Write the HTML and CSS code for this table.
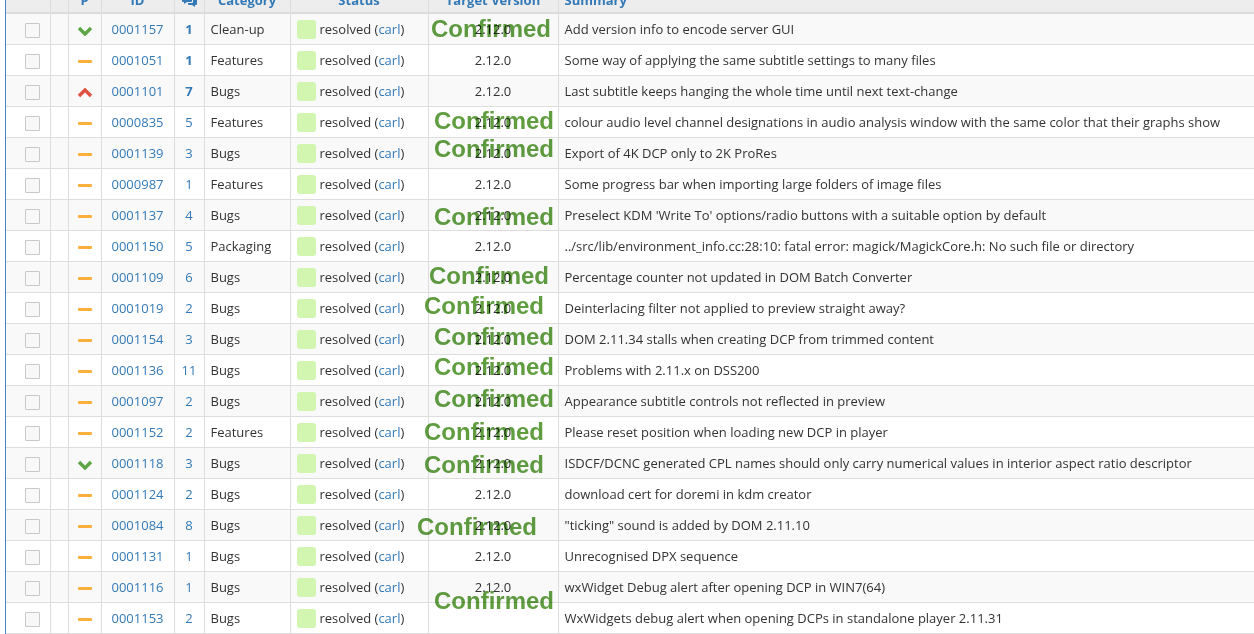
FILE: index.html
```html
<!DOCTYPE html>
<html>
<head>
<meta charset="utf-8">
<link rel="stylesheet" href="styles.css">
</head>
<body>
<div class="page">
<div class="wrap">
<table class="issues">
<colgroup>
<col class="w-cb"><col class="w-e"><col class="w-p"><col class="w-id"><col class="w-n"><col class="w-cat"><col class="w-st"><col class="w-ver"><col>
</colgroup>
<thead>
<tr>
<th></th><th></th><th>P</th><th>ID</th>
<th><svg class="ico-notes" width="15" height="12" viewBox="0 0 15 12"><path d="M1 1h8a1 1 0 0 1 1 1v4a1 1 0 0 1-1 1H5l-3 2V7H1a1 1 0 0 1-1-1V2a1 1 0 0 1 1-1z" fill="#337ab7"/><path d="M11 4h3a1 1 0 0 1 1 1v4a1 1 0 0 1-1 1h-1v2l-3-2H7a1 1 0 0 1-1-1V8h4a1 1 0 0 0 1-1z" fill="#337ab7"/></svg></th>
<th>Category</th><th>Status</th><th>Target Version</th><th class="left">Summary</th>
</tr>
</thead>
<tbody>
<tr><td><span class="cb"></span></td><td></td><td><svg class="pi" width="16" height="10" viewBox="0 0 16 10"><path d="M2 2l6 6 6-6" class="ok"/></svg></td><td class="c"><a>0001157</a></td><td class="c"><a class="b">1</a></td><td>Clean-up</td><td><span class="sq"></span>resolved (<a>carl</a>)</td><td class="c">2.12.0</td><td>Add version info to encode server GUI</td></tr>
<tr><td><span class="cb"></span></td><td></td><td><span class="dash"></span></td><td class="c"><a>0001051</a></td><td class="c"><a class="b">1</a></td><td>Features</td><td><span class="sq"></span>resolved (<a>carl</a>)</td><td class="c">2.12.0</td><td>Some way of applying the same subtitle settings to many files</td></tr>
<tr><td><span class="cb"></span></td><td></td><td><svg class="pi" width="16" height="10" viewBox="0 0 16 10"><path d="M2 8l6-6 6 6" class="up"/></svg></td><td class="c"><a>0001101</a></td><td class="c"><a class="b">7</a></td><td>Bugs</td><td><span class="sq"></span>resolved (<a>carl</a>)</td><td class="c">2.12.0</td><td>Last subtitle keeps hanging the whole time until next text-change</td></tr>
<tr><td><span class="cb"></span></td><td></td><td><span class="dash"></span></td><td class="c"><a>0000835</a></td><td class="c"><a>5</a></td><td>Features</td><td><span class="sq"></span>resolved (<a>carl</a>)</td><td class="c">2.12.0</td><td>colour audio level channel designations in audio analysis window with the same color that their graphs show</td></tr>
<tr><td><span class="cb"></span></td><td></td><td><span class="dash"></span></td><td class="c"><a>0001139</a></td><td class="c"><a>3</a></td><td>Bugs</td><td><span class="sq"></span>resolved (<a>carl</a>)</td><td class="c">2.12.0</td><td>Export of 4K DCP only to 2K ProRes</td></tr>
<tr><td><span class="cb"></span></td><td></td><td><span class="dash"></span></td><td class="c"><a>0000987</a></td><td class="c"><a>1</a></td><td>Features</td><td><span class="sq"></span>resolved (<a>carl</a>)</td><td class="c">2.12.0</td><td>Some progress bar when importing large folders of image files</td></tr>
<tr><td><span class="cb"></span></td><td></td><td><span class="dash"></span></td><td class="c"><a>0001137</a></td><td class="c"><a>4</a></td><td>Bugs</td><td><span class="sq"></span>resolved (<a>carl</a>)</td><td class="c">2.12.0</td><td>Preselect KDM 'Write To' options/radio buttons with a suitable option by default</td></tr>
<tr><td><span class="cb"></span></td><td></td><td><span class="dash"></span></td><td class="c"><a>0001150</a></td><td class="c"><a>5</a></td><td>Packaging</td><td><span class="sq"></span>resolved (<a>carl</a>)</td><td class="c">2.12.0</td><td>../src/lib/environment_info.cc:28:10: fatal error: magick/MagickCore.h: No such file or directory</td></tr>
<tr><td><span class="cb"></span></td><td></td><td><span class="dash"></span></td><td class="c"><a>0001109</a></td><td class="c"><a>6</a></td><td>Bugs</td><td><span class="sq"></span>resolved (<a>carl</a>)</td><td class="c">2.12.0</td><td>Percentage counter not updated in DOM Batch Converter</td></tr>
<tr><td><span class="cb"></span></td><td></td><td><span class="dash"></span></td><td class="c"><a>0001019</a></td><td class="c"><a>2</a></td><td>Bugs</td><td><span class="sq"></span>resolved (<a>carl</a>)</td><td class="c">2.12.0</td><td>Deinterlacing filter not applied to preview straight away?</td></tr>
<tr><td><span class="cb"></span></td><td></td><td><span class="dash"></span></td><td class="c"><a>0001154</a></td><td class="c"><a>3</a></td><td>Bugs</td><td><span class="sq"></span>resolved (<a>carl</a>)</td><td class="c">2.12.0</td><td>DOM 2.11.34 stalls when creating DCP from trimmed content</td></tr>
<tr><td><span class="cb"></span></td><td></td><td><span class="dash"></span></td><td class="c"><a>0001136</a></td><td class="c"><a>11</a></td><td>Bugs</td><td><span class="sq"></span>resolved (<a>carl</a>)</td><td class="c">2.12.0</td><td>Problems with 2.11.x on DSS200</td></tr>
<tr><td><span class="cb"></span></td><td></td><td><span class="dash"></span></td><td class="c"><a>0001097</a></td><td class="c"><a>2</a></td><td>Bugs</td><td><span class="sq"></span>resolved (<a>carl</a>)</td><td class="c">2.12.0</td><td>Appearance subtitle controls not reflected in preview</td></tr>
<tr><td><span class="cb"></span></td><td></td><td><span class="dash"></span></td><td class="c"><a>0001152</a></td><td class="c"><a>2</a></td><td>Features</td><td><span class="sq"></span>resolved (<a>carl</a>)</td><td class="c">2.12.0</td><td>Please reset position when loading new DCP in player</td></tr>
<tr><td><span class="cb"></span></td><td></td><td><svg class="pi" width="16" height="10" viewBox="0 0 16 10"><path d="M2 2l6 6 6-6" class="ok"/></svg></td><td class="c"><a>0001118</a></td><td class="c"><a>3</a></td><td>Bugs</td><td><span class="sq"></span>resolved (<a>carl</a>)</td><td class="c">2.12.0</td><td>ISDCF/DCNC generated CPL names should only carry numerical values in interior aspect ratio descriptor</td></tr>
<tr><td><span class="cb"></span></td><td></td><td><span class="dash"></span></td><td class="c"><a>0001124</a></td><td class="c"><a>2</a></td><td>Bugs</td><td><span class="sq"></span>resolved (<a>carl</a>)</td><td class="c">2.12.0</td><td>download cert for doremi in kdm creator</td></tr>
<tr><td><span class="cb"></span></td><td></td><td><span class="dash"></span></td><td class="c"><a>0001084</a></td><td class="c"><a>8</a></td><td>Bugs</td><td><span class="sq"></span>resolved (<a>carl</a>)</td><td class="c">2.12.0</td><td>"ticking" sound is added by DOM 2.11.10</td></tr>
<tr><td><span class="cb"></span></td><td></td><td><span class="dash"></span></td><td class="c"><a>0001131</a></td><td class="c"><a>1</a></td><td>Bugs</td><td><span class="sq"></span>resolved (<a>carl</a>)</td><td class="c">2.12.0</td><td>Unrecognised DPX sequence</td></tr>
<tr><td><span class="cb"></span></td><td></td><td><span class="dash"></span></td><td class="c"><a>0001116</a></td><td class="c"><a>1</a></td><td>Bugs</td><td><span class="sq"></span>resolved (<a>carl</a>)</td><td class="c">2.12.0</td><td>wxWidget Debug alert after opening DCP in WIN7(64)</td></tr>
<tr><td><span class="cb"></span></td><td></td><td><span class="dash"></span></td><td class="c"><a>0001153</a></td><td class="c"><a>2</a></td><td>Bugs</td><td><span class="sq"></span>resolved (<a>carl</a>)</td><td class="c"></td><td>WxWidgets debug alert when opening DCPs in standalone player 2.11.31</td></tr>
</tbody>
</table>
</div>
<span class="stamp s1">Confirmed</span>
<span class="stamp s2">Confirmed</span>
<span class="stamp s3">Confirmed</span>
<span class="stamp s4">Confirmed</span>
<span class="stamp s5">Confirmed</span>
<span class="stamp s6">Confirmed</span>
<span class="stamp s7">Confirmed</span>
<span class="stamp s8">Confirmed</span>
<span class="stamp s9">Confirmed</span>
<span class="stamp s10">Confirmed</span>
<span class="stamp s11">Confirmed</span>
<span class="stamp s12">Confirmed</span>
<span class="stamp s13">Confirmed</span>
</div>
</body>
</html>
```
FILE: styles.css
```css
html, body {
  margin: 0;
  padding: 0;
  background: #fff;
}
body {
  font-family: "Open Sans", "DejaVu Sans", sans-serif;
  font-size: 13px;
  color: #333;
  overflow: hidden;
}
.page {
  position: relative;
  width: 1254px;
  height: 634px;
  overflow: hidden;
}
.wrap {
  margin-left: 5px;
  margin-top: -13px;
  border-left: 1px solid #4a86c3;
}
.issues {
  border-collapse: collapse;
  table-layout: fixed;
  width: 1300px;
}
.w-cb { width: 44px; }
.w-e { width: 18px; }
.w-p { width: 33px; }
.w-id { width: 73px; }
.w-n { width: 30px; }
.w-cat { width: 86px; }
.w-st { width: 138px; }
.w-ver { width: 130px; }
.issues th {
  background: #ededed;
  border: 1px solid #ddd;
  border-bottom: 2px solid #ddd;
  border-top: 0;
  color: #337ab7;
  font-weight: bold;
  text-align: center;
  padding: 4px 6px 3px;
  line-height: 18px;
  white-space: nowrap;
}
.issues th:first-child, .issues td:first-child { border-left: 0; }
.issues th.left { text-align: left; }
.ico-notes { vertical-align: -2px; }
.issues td {
  border: 1px solid #ddd;
  padding: 5px 6px;
  line-height: 20px;
  white-space: nowrap;
  overflow: hidden;
}
.issues tbody tr:nth-child(odd) td { background: #f9f9f9; }
.issues td.c { text-align: center; }
.issues td:first-child { padding-left: 19px; padding-right: 0; }
.issues td:nth-child(3) { text-align: center; padding: 5px 0; }
a { color: #337ab7; text-decoration: none; }
a.b { font-weight: bold; }
.cb {
  display: inline-block;
  width: 13px;
  height: 13px;
  border: 1px solid #c8c8c8;
  background: #f8f8f8;
  border-radius: 1px;
  vertical-align: middle;
}
.pi { vertical-align: middle; }
.pi path { fill: none; stroke-width: 3.4; stroke-linecap: butt; stroke-linejoin: miter; }
.pi path.ok { stroke: #5ca646; }
.pi path.up { stroke: #e0503f; }
.dash {
  display: inline-block;
  width: 14px;
  height: 3px;
  background: #fbb03b;
  border-radius: 1px;
  vertical-align: middle;
}
.sq {
  display: inline-block;
  width: 19px;
  height: 19px;
  background: #d2f5b0;
  border-radius: 3px;
  vertical-align: middle;
  margin-right: 4px;
  margin-top: -2px;
}
.stamp {
  position: absolute;
  font-family: "Liberation Sans", Arial, sans-serif;
  font-weight: bold;
  font-size: 24px;
  line-height: 24px;
  color: #5f9d3f;
  mix-blend-mode: multiply;
  white-space: nowrap;
}
.s1 { left: 431px; top: 17px; }
.s2 { left: 434px; top: 109px; }
.s3 { left: 434px; top: 137px; }
.s4 { left: 434px; top: 205px; }
.s5 { left: 429px; top: 264px; }
.s6 { left: 424px; top: 294px; }
.s7 { left: 434px; top: 325px; }
.s8 { left: 434px; top: 355px; }
.s9 { left: 434px; top: 387px; }
.s10 { left: 424px; top: 420px; }
.s11 { left: 424px; top: 453px; }
.s12 { left: 417px; top: 515px; }
.s13 { left: 434px; top: 589px; }
```
